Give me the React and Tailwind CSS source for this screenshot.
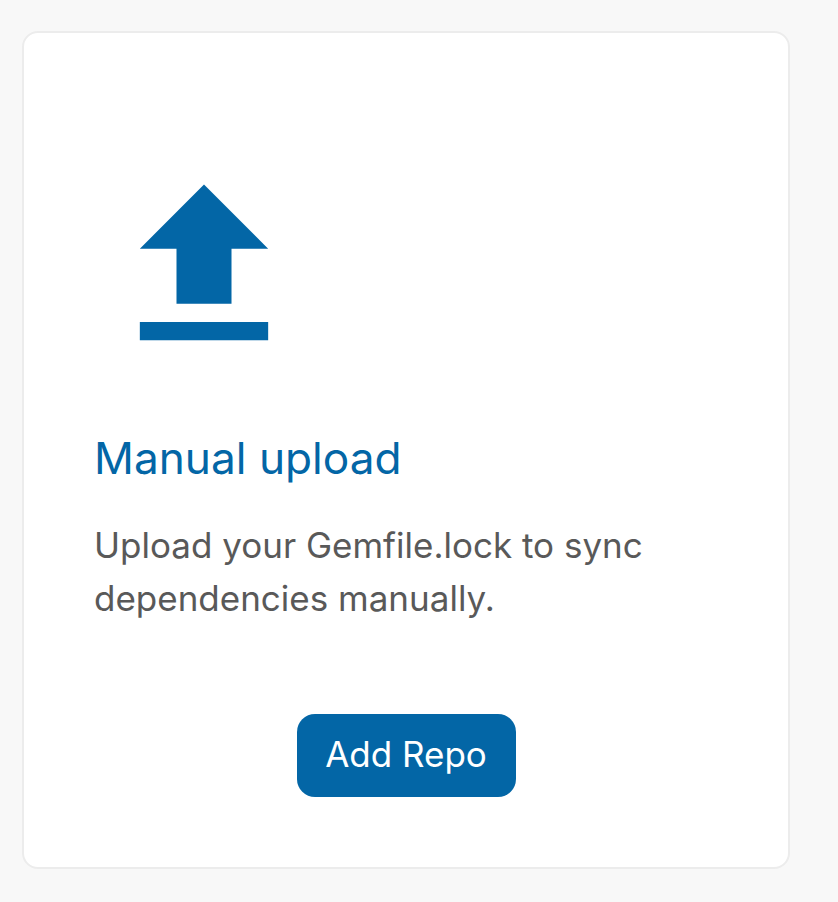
export default function App() {
  return (
    <div className="min-h-[902px] bg-[#f8f8f8] pt-[31px] pl-[22px] font-['Inter',sans-serif]">
      <div className="w-[768px] h-[838px] bg-white rounded-[16px] border-2 border-[#ececec] pl-[70px] pr-[70px] pt-[124px]">
        <svg viewBox="0 0 24 24" className="w-[220px] h-[220px] fill-[#0366a6]">
          <path d="M9 16h6v-6h4l-7-7-7 7h4zm-4 2h14v2H5z" />
        </svg>
        <h3 className="mt-[55px] text-[44.2px] leading-[52px] font-normal text-[#0366a6]">Manual upload</h3>
        <p className="mt-[35px] text-[35px] leading-[53px] text-[#595959]">
          Upload your Gemfile.lock to sync dependencies manually.
        </p>
        <div className="mt-[89px] flex justify-center">
          <button className="w-[219px] h-[83px] pb-[2px] rounded-[18px] bg-[#0366a6] text-white text-[35px]">Add Repo</button>
        </div>
      </div>
    </div>
  );
}
